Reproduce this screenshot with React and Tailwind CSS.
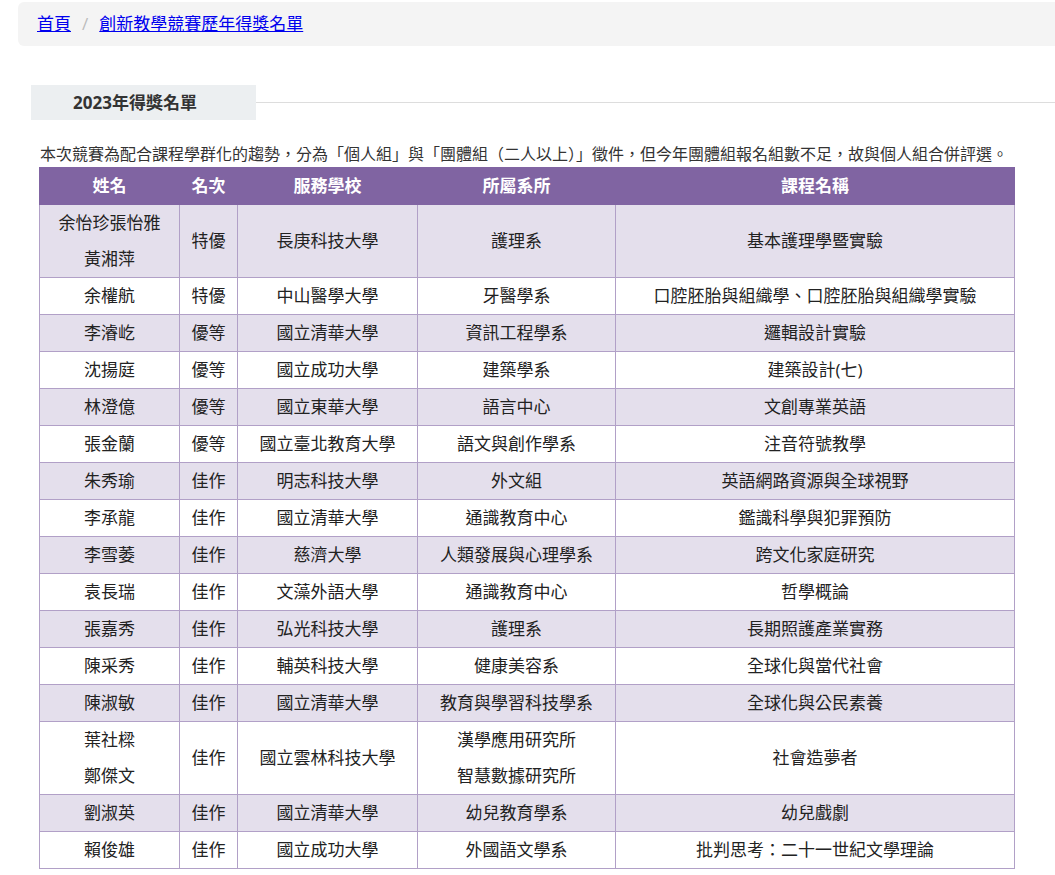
import React from 'react';

const rows = [
  [['余怡珍張怡雅', '黃湘萍'], '特優', '長庚科技大學', ['護理系'], '基本護理學暨實驗'],
  [['余權航'], '特優', '中山醫學大學', ['牙醫學系'], '口腔胚胎與組織學、口腔胚胎與組織學實驗'],
  [['李濬屹'], '優等', '國立清華大學', ['資訊工程學系'], '邏輯設計實驗'],
  [['沈揚庭'], '優等', '國立成功大學', ['建築學系'], '建築設計(七)'],
  [['林澄億'], '優等', '國立東華大學', ['語言中心'], '文創專業英語'],
  [['張金蘭'], '優等', '國立臺北教育大學', ['語文與創作學系'], '注音符號教學'],
  [['朱秀瑜'], '佳作', '明志科技大學', ['外文組'], '英語網路資源與全球視野'],
  [['李承龍'], '佳作', '國立清華大學', ['通識教育中心'], '鑑識科學與犯罪預防'],
  [['李雪萎'], '佳作', '慈濟大學', ['人類發展與心理學系'], '跨文化家庭研究'],
  [['袁長瑞'], '佳作', '文藻外語大學', ['通識教育中心'], '哲學概論'],
  [['張嘉秀'], '佳作', '弘光科技大學', ['護理系'], '長期照護產業實務'],
  [['陳采秀'], '佳作', '輔英科技大學', ['健康美容系'], '全球化與當代社會'],
  [['陳淑敏'], '佳作', '國立清華大學', ['教育與學習科技學系'], '全球化與公民素養'],
  [['葉社樑', '鄭傑文'], '佳作', '國立雲林科技大學', ['漢學應用研究所', '智慧數據研究所'], '社會造夢者'],
  [['劉淑英'], '佳作', '國立清華大學', ['幼兒教育學系'], '幼兒戲劇'],
  [['賴俊雄'], '佳作', '國立成功大學', ['外國語文學系'], '批判思考：二十一世紀文學理論'],
];

const Lines = ({ items }) => items.map((t, i) => <div key={i}>{t}</div>);

export default function App() {
  return (
    <div className="w-[1055px] h-[875px] overflow-hidden bg-white text-[#222]" style={{ fontFamily: '"Open Sans", "Noto Sans CJK TC", sans-serif' }}>
      <div className="ml-[18px] mt-[2px] h-[44px] rounded-l-md bg-[#f4f4f4] pl-[19px] flex items-center text-[17px]">
        <a href="#" className="text-[#0000ee] underline">首頁</a>
        <span className="mx-[11px] text-[#bbb]">/</span>
        <a href="#" className="text-[#0000ee] underline">創新教學競賽歷年得獎名單</a>
      </div>
      <div className="mt-[39px] ml-[31px] flex items-center">
        <div className="w-[225px] h-[35px] bg-[#eceff1] flex items-center pl-[42px] text-[17px] font-bold text-[#333]">2023年得獎名單</div>
        <div className="flex-1 h-px bg-[#ddd]"></div>
      </div>
      <p className="mt-[21px] ml-[40px] whitespace-nowrap text-[16px] text-[#333] leading-[26px]">
        本次競賽為配合課程學群化的趨勢，分為「個人組」與「團體組（二人以上）」徵件，但今年團體組報名組數不足，故與個人組合併評選。
      </p>
      <table className="ml-[39px] w-[976px] border-collapse text-[17px] leading-[36px] text-center table-fixed">
        <colgroup>
          <col className="w-[140px]" /><col className="w-[58px]" /><col className="w-[180px]" /><col className="w-[198px]" /><col />
        </colgroup>
        <thead>
          <tr className="bg-[#8064a2] text-white font-bold h-[36px]">
            {['姓名', '名次', '服務學校', '所屬系所', '課程名稱'].map(h => <th key={h} className="border border-[#8064a2]">{h}</th>)}
          </tr>
        </thead>
        <tbody>
          {rows.map((r, i) => (
            <tr key={i} className={i % 2 === 0 ? 'bg-[#e4dfec]' : 'bg-white'}>
              <td className="border border-[#b1a0c7]"><Lines items={r[0]} /></td>
              <td className="border border-[#b1a0c7]">{r[1]}</td>
              <td className="border border-[#b1a0c7]">{r[2]}</td>
              <td className="border border-[#b1a0c7]"><Lines items={r[3]} /></td>
              <td className="border border-[#b1a0c7] whitespace-nowrap">{r[4]}</td>
            </tr>
          ))}
        </tbody>
      </table>
    </div>
  );
}
